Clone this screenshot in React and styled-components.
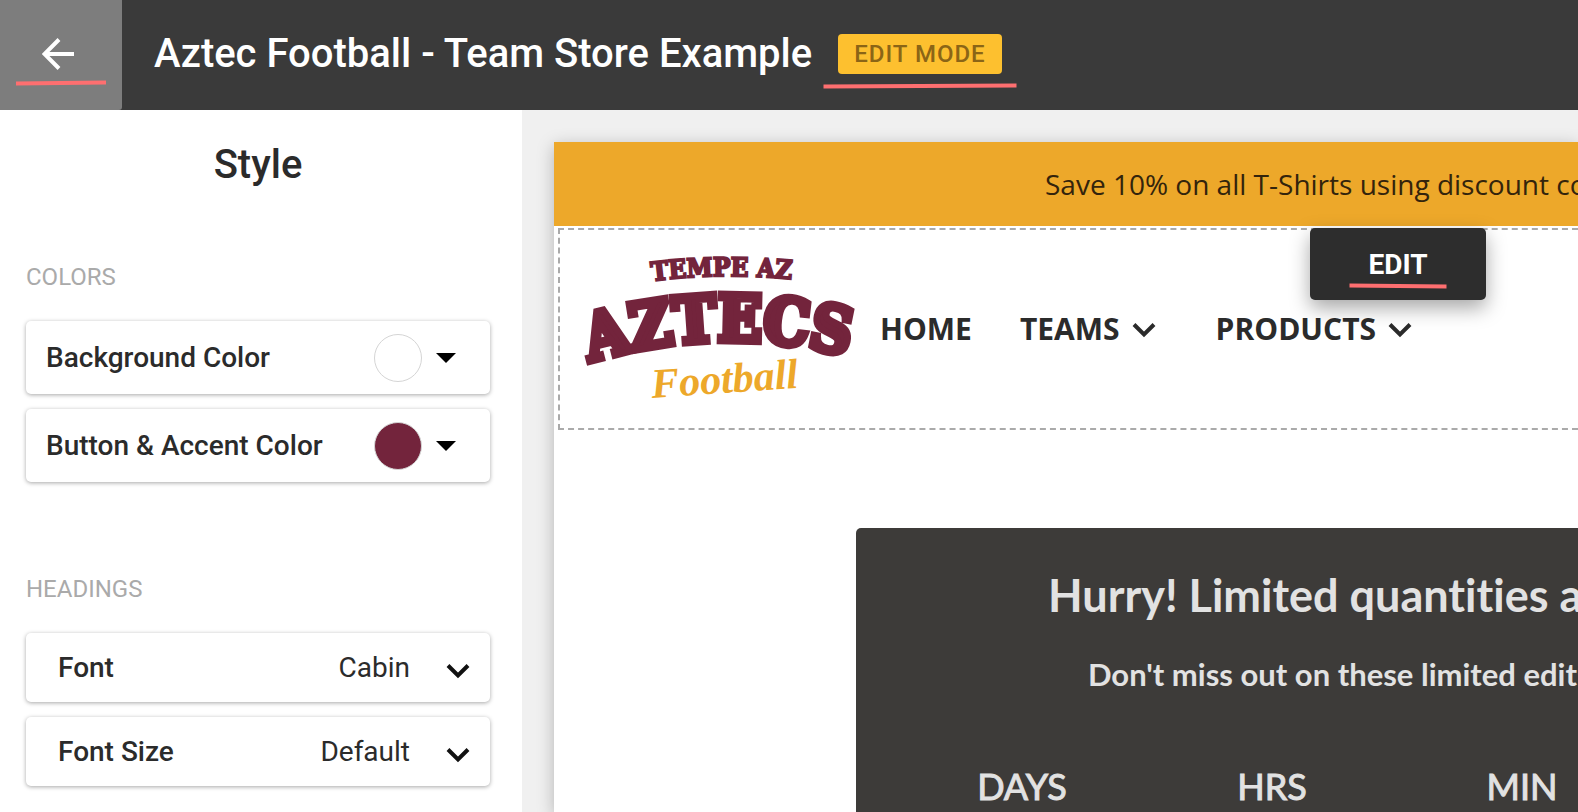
import React from 'react';
import styled, { createGlobalStyle } from 'styled-components';

const swatches = [
    { title: 'Background Color', color: '#ffffff' },
    { title: 'Button & Accent Color', color: '#73243c' },
];

const headingOptions = [
    { id: 'heading-font', title: 'Font', value: 'Cabin' },
    { id: 'heading-size', title: 'Font Size', value: 'Default' },
];

const units = ['DAYS', 'HRS', 'MIN'];

function Chevron() {
    return (
        <ChevronStyled viewBox="0 0 24 16" aria-hidden="true">
            <path d="M2 2.5 L12 12.5 L22 2.5" />
        </ChevronStyled>
    )
}

function Underline({ width, tilt }) {
    return (
        <UnderlineStyled width={width} height="6" viewBox={`0 0 ${width} 6`} aria-hidden="true">
            <path d={`M0 ${3 + tilt / 2} L${width} ${3 - tilt / 2}`} />
        </UnderlineStyled>
    )
}

function TeamLogo() {
    return (
        <LogoStyled viewBox="0 0 270 148" role="img" aria-label="Tempe AZ Aztecs Football">
            <path id="arc-top" d="M66 27 Q136 18 212 26" fill="none" />
            <path id="arc-main" d="M4 108 Q136 68 274 105" fill="none" />
            <text className="top"><textPath href="#arc-top">TEMPE AZ</textPath></text>
            <text className="main"><textPath href="#arc-main">AZTECS</textPath></text>
            <text className="script" x="66" y="144" transform="rotate(-4 66 144)">Football</text>
        </LogoStyled>
    )
}

function App() {
    return (
        <PageStyled>
            <GlobalStyle />
            <TopBar>
                <BackButton type="button" aria-label="Back">
                    <svg width="32" height="32" viewBox="0 0 32 32" aria-hidden="true">
                        <path d="M32 16 H3 M17 1.5 L2.5 16 L17 30.5" />
                    </svg>
                    <Underline width={90} tilt={1} />
                </BackButton>
                <StoreName>Aztec Football - Team Store Example</StoreName>
                <ModeBadge>
                    EDIT MODE
                    <Underline width={193} tilt={1} />
                </ModeBadge>
            </TopBar>
            <Workspace>
                <Sidebar>
                    <SidebarTitle>Style</SidebarTitle>
                    <Group>
                        <GroupTitle>COLORS</GroupTitle>
                        {swatches.map((item) => (
                            <ColorRow type="button" key={item.title}>
                                <span>{item.title}</span>
                                <Swatch $color={item.color} />
                                <svg width="20" height="10" viewBox="0 0 20 10" aria-hidden="true">
                                    <path d="M0 0 H20 L10 10 Z" />
                                </svg>
                            </ColorRow>
                        ))}
                    </Group>
                    <Group>
                        <GroupTitle>HEADINGS</GroupTitle>
                        {headingOptions.map((item) => (
                            <SelectRow key={item.id}>
                                <label htmlFor={item.id}>{item.title}</label>
                                <select id={item.id} defaultValue={item.value}>
                                    <option>{item.value}</option>
                                </select>
                                <Chevron />
                            </SelectRow>
                        ))}
                    </Group>
                </Sidebar>
                <Canvas>
                    <Storefront>
                        <Promo>Save 10% on all T-Shirts using discount co</Promo>
                        <StoreHeader>
                            <TeamLogo />
                            <Nav>
                                <a href="#home">HOME</a>
                                <a href="#teams">TEAMS <Chevron /></a>
                                <a href="#products">PRODUCTS <Chevron /></a>
                            </Nav>
                            <EditButton type="button">
                                EDIT
                                <Underline width={97} tilt={-1} />
                            </EditButton>
                        </StoreHeader>
                        <Countdown>
                            <h2>Hurry! Limited quantities a</h2>
                            <p>Don't miss out on these limited editi</p>
                            <Units>
                                {units.map((unit) => <li key={unit}>{unit}</li>)}
                            </Units>
                        </Countdown>
                    </Storefront>
                </Canvas>
            </Workspace>
        </PageStyled>
    )
}

const GlobalStyle = createGlobalStyle`
    *{
        box-sizing: border-box;
        margin: 0;
        padding: 0;
    }
    body{
        font-family: Roboto, "Liberation Sans", sans-serif;
        color: #2b2b2b;
        background: #f0f0f0;
    }
    button, select{
        font: inherit;
        color: inherit;
        border: none;
    }
`;

const PageStyled = styled.div`
    height: 100vh;
    display: flex;
    flex-direction: column;
    overflow: hidden;
`;

const UnderlineStyled = styled.svg`
    position: absolute;
    left: 50%;
    bottom: var(--underline-bottom, 24px);
    transform: translateX(-50%);
    overflow: visible;
    path{
        stroke: #fe6f70;
        stroke-width: 4;
    }
`;

const ChevronStyled = styled.svg`
    width: 24px;
    height: 16px;
    flex: none;
    fill: none;
    stroke: currentColor;
    stroke-width: 4;
`;

const TopBar = styled.header`
    flex: none;
    height: 110px;
    display: flex;
    align-items: center;
    padding-bottom: 2px;
    background: #3a3a3a;
    color: #fff;
`;

const BackButton = styled.button`
    position: relative;
    width: 122px;
    height: 110px;
    display: flex;
    align-items: center;
    justify-content: center;
    margin-bottom: -2px;
    padding: 0 6px 2px 0;
    background: #7d7d7d;
    border-radius: 0 0 3px 0;
    color: #fff;
    svg{
        fill: none;
        stroke: currentColor;
        stroke-width: 4;
    }
`;

const StoreName = styled.h1`
    margin-left: 32px;
    font-size: 40px;
    font-weight: 500;
    line-height: 48px;
    white-space: nowrap;
`;

const ModeBadge = styled.span`
    --underline-bottom: -15px;
    position: relative;
    margin-left: 26px;
    padding: 0 16px;
    border-radius: 4px;
    background: #fdc02f;
    color: #8b6516;
    font-size: 24px;
    font-weight: 500;
    line-height: 40px;
    letter-spacing: 1px;
    white-space: nowrap;
`;

const Workspace = styled.div`
    flex: 1;
    min-height: 0;
    display: flex;
`;

const Sidebar = styled.aside`
    flex: none;
    width: 522px;
    padding: 30px 32px 0 26px;
    background: #fff;
`;

const SidebarTitle = styled.h2`
    font-size: 40px;
    font-weight: 500;
    line-height: 50px;
    text-align: center;
`;

const Group = styled.section`
    display: grid;
    gap: 15px;
    padding-top: 72px;
    & + &{
        padding-top: 92px;
    }
`;

const GroupTitle = styled.h3`
    margin-bottom: 14px;
    color: #aaa;
    font-size: 24px;
    font-weight: 400;
    line-height: 30px;
`;

const ColorRow = styled.button`
    height: 73px;
    display: flex;
    align-items: center;
    gap: 14px;
    padding: 0 34px 0 20px;
    border-radius: 5px;
    background: #fff;
    box-shadow: 0 1px 4px rgba(0, 0, 0, 0.35);
    font-size: 28px;
    font-weight: 500;
    text-align: left;
    span:first-child{
        flex: 1;
        white-space: nowrap;
    }
`;

const Swatch = styled.span`
    width: 48px;
    height: 48px;
    border: 1px solid #d5d5d5;
    border-radius: 50%;
    background: ${(props) => props.$color};
`;

const SelectRow = styled.div`
    height: 69px;
    display: flex;
    align-items: center;
    padding: 0 20px 0 32px;
    border-radius: 5px;
    background: #fff;
    box-shadow: 0 1px 4px rgba(0, 0, 0, 0.35);
    font-size: 28px;
    label{
        font-weight: 500;
    }
    select{
        flex: 1;
        margin-right: 36px;
        appearance: none;
        background: none;
        text-align-last: right;
    }
    svg{
        color: #111;
        margin-top: 6px;
    }
`;

const Canvas = styled.main`
    flex: 1;
    min-width: 0;
    padding: 32px 0 0 32px;
`;

const Storefront = styled.div`
    height: 100%;
    display: flex;
    flex-direction: column;
    background: #fff;
    box-shadow: 0 4px 16px rgba(0, 0, 0, 0.25);
`;

const Promo = styled.p`
    flex: none;
    padding-left: 491px;
    background: #eda82a;
    color: #33240c;
    font-family: "Open Sans", sans-serif;
    font-size: 28px;
    line-height: 84px;
    white-space: nowrap;
    overflow: hidden;
`;

const StoreHeader = styled.header`
    position: relative;
    flex: none;
    height: 202px;
    display: flex;
    align-items: flex-start;
    margin: 2px 0 0 4px;
    padding: 24px 0 0 26px;
    border: 2px dashed #aaa;
    border-right: none;
`;

const LogoStyled = styled.svg`
    width: 270px;
    height: 148px;
    flex: none;
    overflow: visible;
    .top, .main{
        font-family: "DejaVu Serif Condensed", "DejaVu Serif", serif;
        font-weight: 700;
        fill: #73243c;
        stroke: #73243c;
    }
    .top{
        font-size: 26px;
        stroke-width: 2;
    }
    .main{
        font-size: 64px;
        stroke-width: 7;
    }
    .script{
        font-family: "Liberation Serif", serif;
        font-size: 42px;
        font-style: italic;
        font-weight: 700;
        fill: #eda82a;
    }
`;

const Nav = styled.nav`
    display: flex;
    gap: 48px;
    margin: 53px 0 0 24px;
    font-family: "Open Sans", sans-serif;
    font-size: 30px;
    font-weight: 700;
    line-height: 44px;
    a{
        display: flex;
        align-items: center;
        gap: 12px;
        color: #2b2b2b;
        text-decoration: none;
    }
    a + a + a{
        margin-left: 12px;
    }
    svg{
        margin-top: 2px;
    }
`;

const EditButton = styled.button`
    --underline-bottom: 11px;
    position: absolute;
    top: -2px;
    right: 92px;
    width: 176px;
    height: 72px;
    border-radius: 5px;
    background: #2d2d2d;
    box-shadow: 0 8px 20px rgba(0, 0, 0, 0.35);
    color: #fff;
    font-size: 28px;
    font-weight: 700;
`;

const Countdown = styled.section`
    flex: 1;
    min-height: 0;
    margin: 98px 0 0 302px;
    padding-top: 35px;
    border-top-left-radius: 5px;
    background: #3d3b39;
    color: #e2e2e2;
    font-family: Lato, sans-serif;
    font-variant-ligatures: none;
    white-space: nowrap;
    overflow: hidden;
    h2{
        padding-left: 192px;
        font-size: 45px;
        font-weight: 700;
        line-height: 64px;
    }
    p{
        margin-top: 25px;
        padding-left: 232px;
        font-size: 31px;
        font-weight: 700;
        line-height: 44px;
    }
`;

const Units = styled.ul`
    display: grid;
    grid-template-columns: repeat(3, 250px);
    margin-top: 66px;
    padding-left: 41px;
    list-style: none;
    font-size: 36px;
    line-height: 48px;
    text-align: center;
    -webkit-text-stroke: 1px #e2e2e2;
`;

export default App;
